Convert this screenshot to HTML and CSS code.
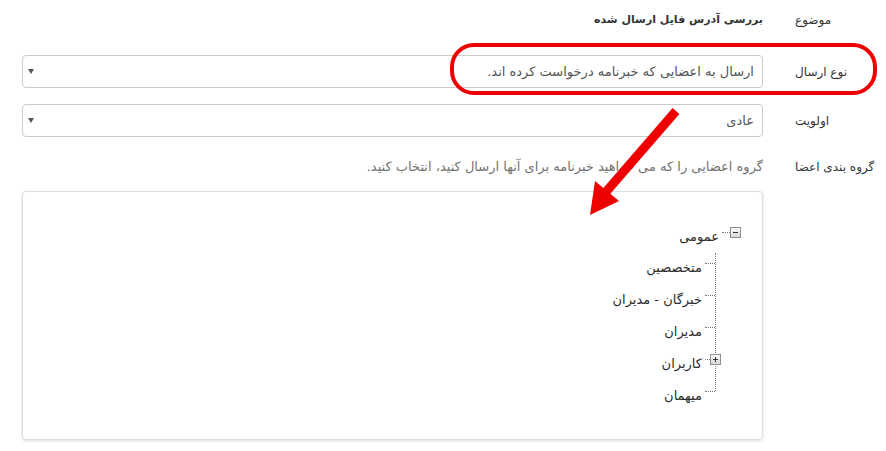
FILE: index.html
```html
<!DOCTYPE html>
<html lang="fa" dir="ltr">
<head>
<meta charset="utf-8">
<title>ارسال خبرنامه</title>
<link rel="stylesheet" href="styles.css">
</head>
<body>
<div class="page">
  <form class="form">
    <div class="row row-subject">
      <label class="lbl">موضوع</label>
      <div class="ctl"><p class="static">بررسی آدرس فایل ارسال شده</p></div>
    </div>
    <div class="row">
      <label class="lbl">نوع ارسال</label>
      <div class="ctl">
        <div class="select"><span class="val">ارسال به اعضایی که خبرنامه درخواست کرده اند.</span><span class="caret"></span></div>
      </div>
    </div>
    <div class="row">
      <label class="lbl">اولویت</label>
      <div class="ctl">
        <div class="select"><span class="val">عادی</span><span class="caret"></span></div>
      </div>
    </div>
    <div class="row row-groups">
      <label class="lbl">گروه بندی اعضا</label>
      <div class="ctl">
        <p class="help">گروه اعضایی را که می خواهید خبرنامه برای آنها ارسال کنید، انتخاب کنید.</p>
        <div class="treebox">
          <ul class="tree">
            <li class="node">
              <div class="node-row root-row">
                <svg class="toggle" width="11" height="11" viewBox="0 0 11 11"><defs><linearGradient id="tg1" x1="0" y1="0" x2="0" y2="1"><stop offset="0" stop-color="#ffffff"/><stop offset="1" stop-color="#d4d4d4"/></linearGradient></defs><rect x="0.5" y="0.5" width="10" height="10" fill="url(#tg1)" stroke="#8f8f8f"/><path d="M3 5.5H8" stroke="#333" stroke-width="1"/></svg>
                <span class="hline hline-root"></span>
                <span class="txt">عمومی</span>
              </div>
              <ul class="children">
                <li class="child"><span class="hline"></span><span class="txt">متخصصین</span></li>
                <li class="child"><span class="hline"></span><span class="txt">خبرگان - مدیران</span></li>
                <li class="child"><span class="hline"></span><span class="txt">مدیران</span></li>
                <li class="child"><svg class="toggle toggle-child" width="11" height="11" viewBox="0 0 11 11"><defs><linearGradient id="tg2" x1="0" y1="0" x2="0" y2="1"><stop offset="0" stop-color="#ffffff"/><stop offset="1" stop-color="#d4d4d4"/></linearGradient></defs><rect x="0.5" y="0.5" width="10" height="10" fill="url(#tg2)" stroke="#8f8f8f"/><path d="M3 5.5H8M5.5 3V8" stroke="#333" stroke-width="1"/></svg><span class="hline hline-short"></span><span class="txt">کاربران</span></li>
                <li class="child"><span class="hline"></span><span class="txt">میهمان</span></li>
              </ul>
            </li>
          </ul>
        </div>
      </div>
    </div>
  </form>
  <svg class="annot" width="886" height="451" viewBox="0 0 886 451">
    <rect x="452" y="45" width="423" height="48" rx="22" ry="22" fill="none" stroke="#ee0000" stroke-width="4"/>
    <line x1="676" y1="111" x2="605" y2="193" stroke="#ee0000" stroke-width="9"/>
    <polygon points="590,215 595,181 619,201" fill="#ee0000"/>
  </svg>
</div>
</body>
</html>
```

FILE: styles.css
```css
* {
  box-sizing: border-box;
}

body {
  margin: 0;
  background: #ffffff;
  font-family: "DejaVu Sans", sans-serif;
  font-size: 13px;
  color: #333333;
}

.page {
  position: relative;
  width: 886px;
  height: 451px;
  overflow: hidden;
}

.form {
  direction: rtl;
  padding: 3px 0 0 22px;
}

.row {
  display: grid;
  grid-template-columns: 123px 1fr;
  margin-bottom: 15px;
}

.row-subject {
  margin-bottom: 18px;
}

.lbl {
  display: block;
  text-align: left;
  padding-left: 32px;
  height: 34px;
  line-height: 34px;
  font-size: 12px;
  white-space: nowrap;
}

.static {
  margin: 0;
  font-weight: bold;
  font-size: 11px;
  line-height: 34px;
}

.select {
  height: 33px;
  border: 1px solid #cccccc;
  border-radius: 4px;
  display: flex;
  align-items: center;
  justify-content: space-between;
  padding: 0 8px 0 5px;
  color: #555555;
  font-size: 13px;
}

.caret {
  width: 0;
  height: 0;
  border-left: 3px solid transparent;
  border-right: 3px solid transparent;
  border-top: 5px solid #555555;
}

.row-groups .lbl {
  height: auto;
  line-height: 20px;
  padding-top: 4px;
}

.help {
  margin: 0 0 14px;
  padding-top: 4px;
  line-height: 20px;
  color: #737373;
  font-size: 13px;
}

.treebox {
  height: 249px;
  border: 1px solid #dddddd;
  border-radius: 4px;
  box-shadow: 0 1px 3px rgba(0, 0, 0, 0.13);
  padding: 30px 21px 0 0;
}

.tree,
.children {
  list-style: none;
  margin: 0;
  padding: 0;
}

.node-row {
  display: flex;
  align-items: center;
  height: 20px;
}

.toggle {
  flex: none;
  display: block;
}

.hline {
  flex: none;
  width: 10px;
  height: 0;
  border-top: 1px dotted #7a7a7a;
  margin-left: 3px;
}

.hline-root {
  width: 8px;
}

.hline-short {
  width: 5px;
}

.txt {
  color: #2b2b2b;
  font-size: 13px;
  white-space: nowrap;
  padding-top: 8px;
}

.children {
  display: flex;
  flex-direction: column;
  border-right: 1px dotted #7a7a7a;
  margin: 11px 25px 0 0;
}

.child {
  display: flex;
  align-items: center;
  height: 32px;
}

.child:first-child {
  margin-top: -6px;
}

.child:last-child {
  margin-bottom: -16px;
}

.toggle-child {
  margin-right: -6px;
}

.annot {
  position: absolute;
  top: 0;
  left: 0;
  pointer-events: none;
}
```
